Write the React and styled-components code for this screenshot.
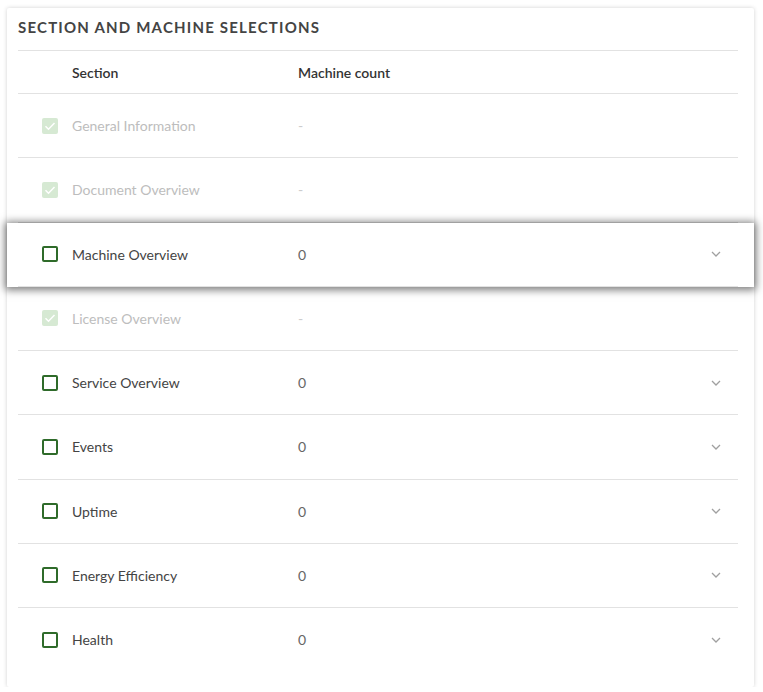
import React from "react";
import styled, { createGlobalStyle } from "styled-components";

const GlobalStyle = createGlobalStyle`
  body {
    margin: 0;
    background: #ffffff;
    font-family: Lato, "Open Sans", sans-serif;
  }
`;

const Card = styled.div`
  margin: 8px 9px 0 7px;
  width: 747px;
  height: 679px;
  background: #ffffff;
  border-radius: 2px;
  box-shadow: 0 0 4px rgba(0, 0, 0, 0.18);
  box-sizing: border-box;
`;

const Title = styled.h2`
  margin: 0 16px 0 11px;
  padding: 9px 0 13px;
  line-height: 20px;
  font-size: 15px;
  font-weight: 700;
  letter-spacing: 1.2px;
  text-transform: uppercase;
  color: #444444;
  border-bottom: 1px solid #e2e2e2;
`;

const Line = styled.div`
  display: flex;
  align-items: center;
  margin: 0 16px 0 11px;
  height: ${(p) => p.$height}px;
  border-bottom: ${(p) => (p.$last ? "none" : "1px solid #e2e2e2")};
`;

const Row = styled.div`
  position: relative;
  z-index: ${(p) => (p.$active ? 1 : 0)};
  background: #ffffff;
  box-shadow: ${(p) =>
    p.$active ? "0 1px 8px 2px rgba(0, 0, 0, 0.52)" : "none"};
`;

const BoxCell = styled.div`
  width: 54px;
  padding-left: 24px;
  box-sizing: border-box;
  display: flex;
  align-items: center;
`;

const SectionCell = styled.div`
  width: 226px;
  font-size: 14px;
  font-weight: ${(p) => (p.$head ? 600 : 400)};
  color: ${(p) => (p.$head ? "#333333" : p.$disabled ? "#bdbdbd" : "#444444")};
`;

const CountCell = styled.div`
  flex: 1;
  font-size: 14px;
  font-weight: ${(p) => (p.$head ? 600 : 400)};
  color: ${(p) => (p.$head ? "#333333" : p.$disabled ? "#cccccc" : "#666666")};
`;

const Toggle = styled.div`
  width: 12px;
  margin-right: 16px;
  display: flex;
  align-items: center;
  justify-content: center;
  color: #a0a0a0;
`;

const Box = styled.span`
  width: 16px;
  height: 16px;
  box-sizing: border-box;
  border-radius: 2px;
  display: flex;
  align-items: center;
  justify-content: center;
  background: ${(p) => (p.$checked ? "#d6e9d3" : "#ffffff")};
  border: ${(p) => (p.$checked ? "none" : "2px solid #2f6b2a")};
`;

const sections = [
  { name: "General Information", locked: true },
  { name: "Document Overview", locked: true },
  { name: "Machine Overview", active: true },
  { name: "License Overview", locked: true },
  { name: "Service Overview" },
  { name: "Events" },
  { name: "Uptime" },
  { name: "Energy Efficiency" },
  { name: "Health" },
];

function Chevron() {
  return (
    <svg width="10" height="6" viewBox="0 0 10 6">
      <path
        d="M1 1l4 4 4-4"
        fill="none"
        stroke="currentColor"
        strokeWidth="1.3"
      />
    </svg>
  );
}

function Check({ checked }) {
  return (
    <Box $checked={checked}>
      {checked && (
        <svg width="12" height="10" viewBox="0 0 12 10">
          <path
            d="M1.5 5.2l3 3L10.5 2"
            fill="none"
            stroke="#ffffff"
            strokeWidth="1.5"
          />
        </svg>
      )}
    </Box>
  );
}

export default function App() {
  return (
    <>
      <GlobalStyle />
      <Card>
        <Title>Section and machine selections</Title>
        <Line $height={42}>
          <BoxCell />
          <SectionCell $head>Section</SectionCell>
          <CountCell $head>Machine count</CountCell>
        </Line>
        {sections.map((s, i) => (
          <Row key={s.name} $active={s.active}>
            <Line $height={63.25} $last={i === sections.length - 1}>
              <BoxCell>
                <Check checked={s.locked} />
              </BoxCell>
              <SectionCell $disabled={s.locked}>{s.name}</SectionCell>
              <CountCell $disabled={s.locked}>{s.locked ? "-" : "0"}</CountCell>
              {!s.locked && (
                <Toggle>
                  <Chevron />
                </Toggle>
              )}
            </Line>
          </Row>
        ))}
      </Card>
    </>
  );
}
